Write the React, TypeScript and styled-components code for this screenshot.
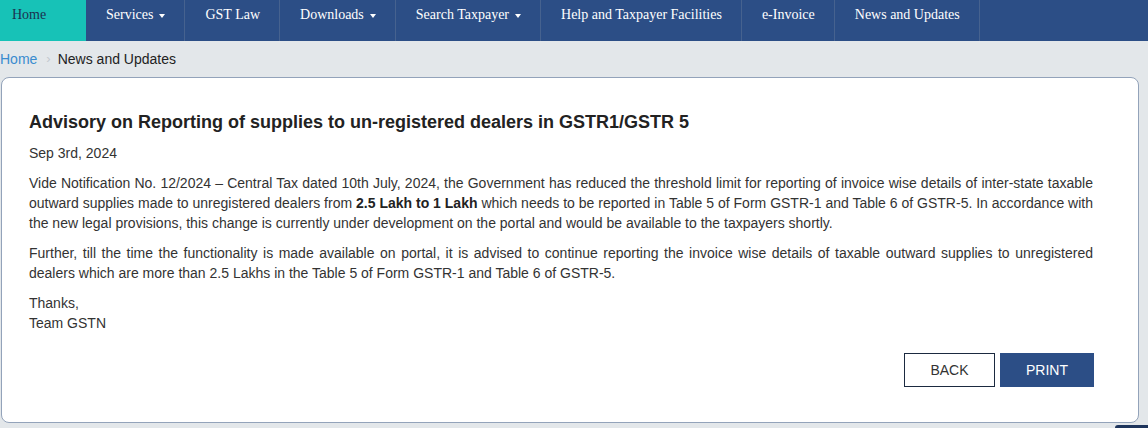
import React from "react";
import styled, { createGlobalStyle } from "styled-components";

const Global = createGlobalStyle`
  html, body { margin: 0; padding: 0; background: #e3e7ea; }
  body { font-family: "Liberation Sans", Arial, sans-serif; color: #333; }
  * { box-sizing: border-box; }
`;

const Nav = styled.nav`
  display: flex;
  height: 41px;
  background: #2c4e86;
`;

const NavItem = styled.a<{ $active?: boolean; $width?: number }>`
  display: flex;
  align-items: flex-start;
  height: 41px;
  padding: ${(p) => (p.$active ? "5px 0 0 12px" : "5px 19px 0 20px")};
  line-height: 20px;
  width: ${(p) => (p.$width ? `${p.$width}px` : "auto")};
  background: ${(p) => (p.$active ? "#17c2b7" : "transparent")};
  color: ${(p) => (p.$active ? "#1c3150" : "#ffffff")};
  border-right: 1px solid ${(p) => (p.$active ? "transparent" : "#46628f")};
  font-family: "Liberation Serif", "Times New Roman", serif;
  font-size: 14px;
  text-decoration: none;
  white-space: nowrap;
`;

const Caret = styled.span`
  display: inline-block;
  margin-left: 6px;
  margin-top: 9px;
  width: 0;
  height: 0;
  border-left: 3.5px solid transparent;
  border-right: 3.5px solid transparent;
  border-top: 4px solid #ffffff;
`;

const Main = styled.main`
  padding: 0 9px 0 1px;
`;

const Crumbs = styled.div`
  display: flex;
  align-items: center;
  height: 36px;
  margin-left: -1px;
  font-size: 14px;
  padding-bottom: 1px;
`;

const CrumbLink = styled.a`
  color: #3a8ccf;
  text-decoration: none;
`;

const CrumbSep = styled.span`
  color: #c3c9cf;
  margin: 0 7px 0 9px;
  font-size: 13px;
`;

const CrumbCurrent = styled.span`
  color: #222;
`;

const Card = styled.section`
  background: #fff;
  border: 1px solid #93a3ba;
  border-radius: 8px;
  padding: 33px 45px 35px 27px;
  height: 346px;
`;

const Title = styled.h1`
  margin: 0;
  font-size: 18px;
  line-height: 22px;
  font-weight: bold;
  color: #222;
`;

const DateLine = styled.p`
  margin: 10px 0 0;
  font-size: 14px;
  line-height: 20px;
  color: #333;
`;

const Para = styled.p`
  margin: 10px 0 0;
  font-size: 14px;
  line-height: 20px;
  text-align: justify;
  color: #333;
  b { color: #222; }
`;

const Buttons = styled.div`
  display: flex;
  justify-content: flex-end;
  gap: 5px;
  margin: 20px -1px 0 0;
`;

const Btn = styled.button<{ $primary?: boolean; $w: number }>`
  width: ${(p) => p.$w}px;
  height: 34px;
  border: 1px solid ${(p) => (p.$primary ? "#2c4e86" : "#1b2a40")};
  background: ${(p) => (p.$primary ? "#2c4e86" : "#fff")};
  color: ${(p) => (p.$primary ? "#fff" : "#333")};
  font-family: "Liberation Sans", Arial, sans-serif;
  font-size: 14px;
  text-transform: uppercase;
  padding: 0;
  cursor: pointer;
`;

const ScrollTop = styled.div`
  position: fixed;
  right: 0;
  bottom: 0;
  width: 33px;
  height: 3px;
  background: #1e355c;
  border-radius: 3px 0 0 0;
`;

export default function App() {
  return (
    <>
      <Global />
      <Nav>
        <NavItem $active $width={86} href="#">Home</NavItem>
        <NavItem href="#">Services<Caret /></NavItem>
        <NavItem href="#">GST Law</NavItem>
        <NavItem href="#">Downloads<Caret /></NavItem>
        <NavItem href="#">Search Taxpayer<Caret /></NavItem>
        <NavItem href="#">Help and Taxpayer Facilities</NavItem>
        <NavItem href="#">e-Invoice</NavItem>
        <NavItem href="#">News and Updates</NavItem>
      </Nav>
      <Main>
        <Crumbs>
          <CrumbLink href="#">Home</CrumbLink>
          <CrumbSep>›</CrumbSep>
          <CrumbCurrent>News and Updates</CrumbCurrent>
        </Crumbs>
        <Card>
          <Title>Advisory on Reporting of supplies to un-registered dealers in GSTR1/GSTR 5</Title>
          <DateLine>Sep 3rd, 2024</DateLine>
          <Para>
            Vide Notification No. 12/2024 – Central Tax dated 10th July, 2024, the Government has reduced the threshold limit for reporting of invoice wise details of inter-state taxable outward supplies made to unregistered dealers from <b>2.5 Lakh to 1 Lakh</b> which needs to be reported in Table 5 of Form GSTR-1 and Table 6 of GSTR-5. In accordance with the new legal provisions, this change is currently under development on the portal and would be available to the taxpayers shortly.
          </Para>
          <Para>
            Further, till the time the functionality is made available on portal, it is advised to continue reporting the invoice wise details of taxable outward supplies to unregistered dealers which are more than 2.5 Lakhs in the Table 5 of Form GSTR-1 and Table 6 of GSTR-5.
          </Para>
          <Para>
            Thanks,
            <br />
            Team GSTN
          </Para>
          <Buttons>
            <Btn $w={91}>Back</Btn>
            <Btn $primary $w={94}>Print</Btn>
          </Buttons>
        </Card>
      </Main>
      <ScrollTop />
    </>
  );
}
